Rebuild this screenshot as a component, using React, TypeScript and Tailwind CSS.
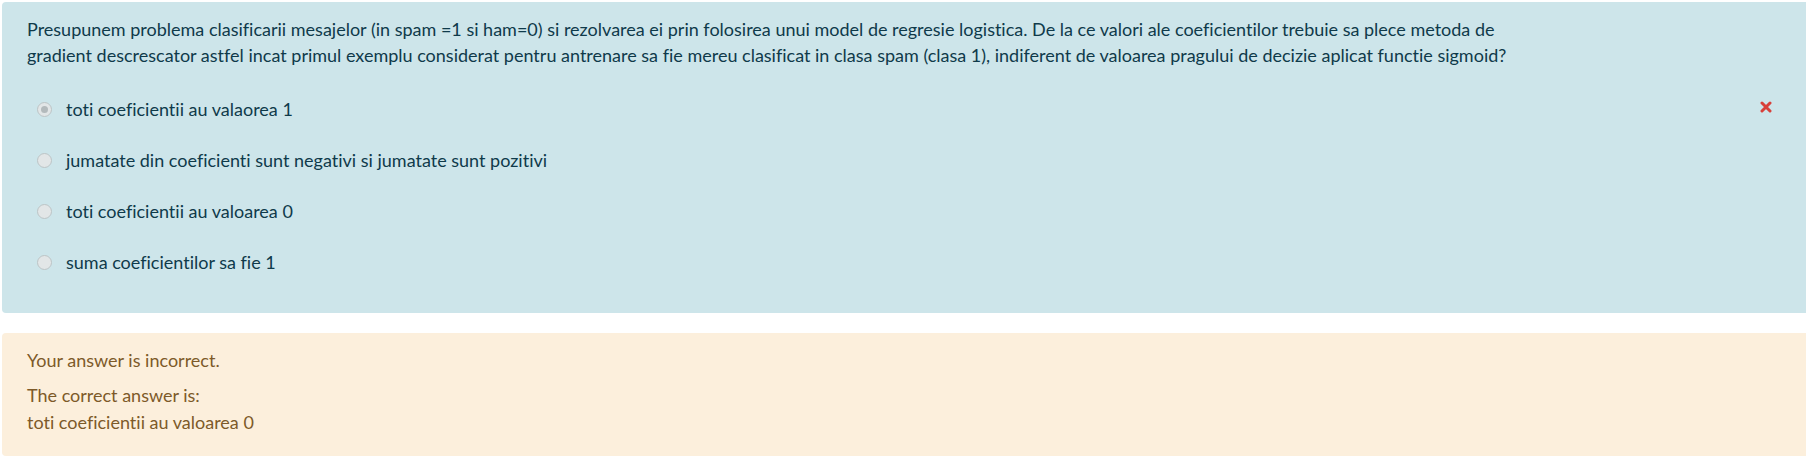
const options = [
  { label: "toti coeficientii au valaorea 1", checked: true },
  { label: "jumatate din coeficienti sunt negativi si jumatate sunt pozitivi", checked: false },
  { label: "toti coeficientii au valoarea 0", checked: false },
  { label: "suma coeficientilor sa fie 1", checked: false },
];

function Radio({ checked }: { checked: boolean }) {
  return (
    <span className="ml-[10px] mr-[14px] flex h-[15px] w-[15px] shrink-0 items-center justify-center rounded-full border-[1.5px] border-[#bcc4c6] bg-[#e2e6e7]">
      {checked && <span className="h-[7px] w-[7px] rounded-full bg-[#b3babc]" />}
    </span>
  );
}

export default function App() {
  return (
    <div className="min-h-screen w-[1806px] overflow-hidden bg-white font-['Lato','Liberation_Sans',sans-serif] text-[18px] [font-variant-ligatures:none]">
      <div className="ml-[2px] mt-[2px] w-[1812px] rounded-[4px] bg-[#cde5ea] pb-[25px] pl-[25px] pr-[42px] pt-[14px] text-[#0f3a4a]">
        <p className="leading-[26px]">
          Presupunem problema clasificarii mesajelor (in spam =1 si ham=0) si rezolvarea ei prin folosirea unui model de
          regresie logistica. De la ce valori ale coeficientilor trebuie sa plece metoda de
          <br />
          gradient descrescator astfel incat primul exemplu considerat pentru antrenare sa fie mereu clasificat in clasa
          spam (clasa 1), indiferent de valoarea pragului de decizie aplicat functie sigmoid?
        </p>
        <div className="mt-[16px]">
          {options.map((o, i) => (
            <div key={i} className="flex h-[51px] items-center leading-[27px]">
              <Radio checked={o.checked} />
              <span>{o.label}</span>
              {i === 0 && (
                <svg viewBox="0 0 12 12" className="-mt-[6px] ml-auto h-[12px] w-[12px]">
                  <path d="M2 2 L10 10 M10 2 L2 10" stroke="#d8403a" strokeWidth="3" strokeLinecap="round" />
                </svg>
              )}
            </div>
          ))}
        </div>
      </div>
      <div className="ml-[2px] mt-[20px] w-[1812px] rounded-[4px] bg-[#fcefdc] pb-[20px] pl-[25px] pt-[14px] leading-[27px] text-[#7d5a29]">
        <p>Your answer is incorrect.</p>
        <p className="mt-[8px]">The correct answer is:</p>
        <p>toti coeficientii au valoarea 0</p>
      </div>
    </div>
  );
}
